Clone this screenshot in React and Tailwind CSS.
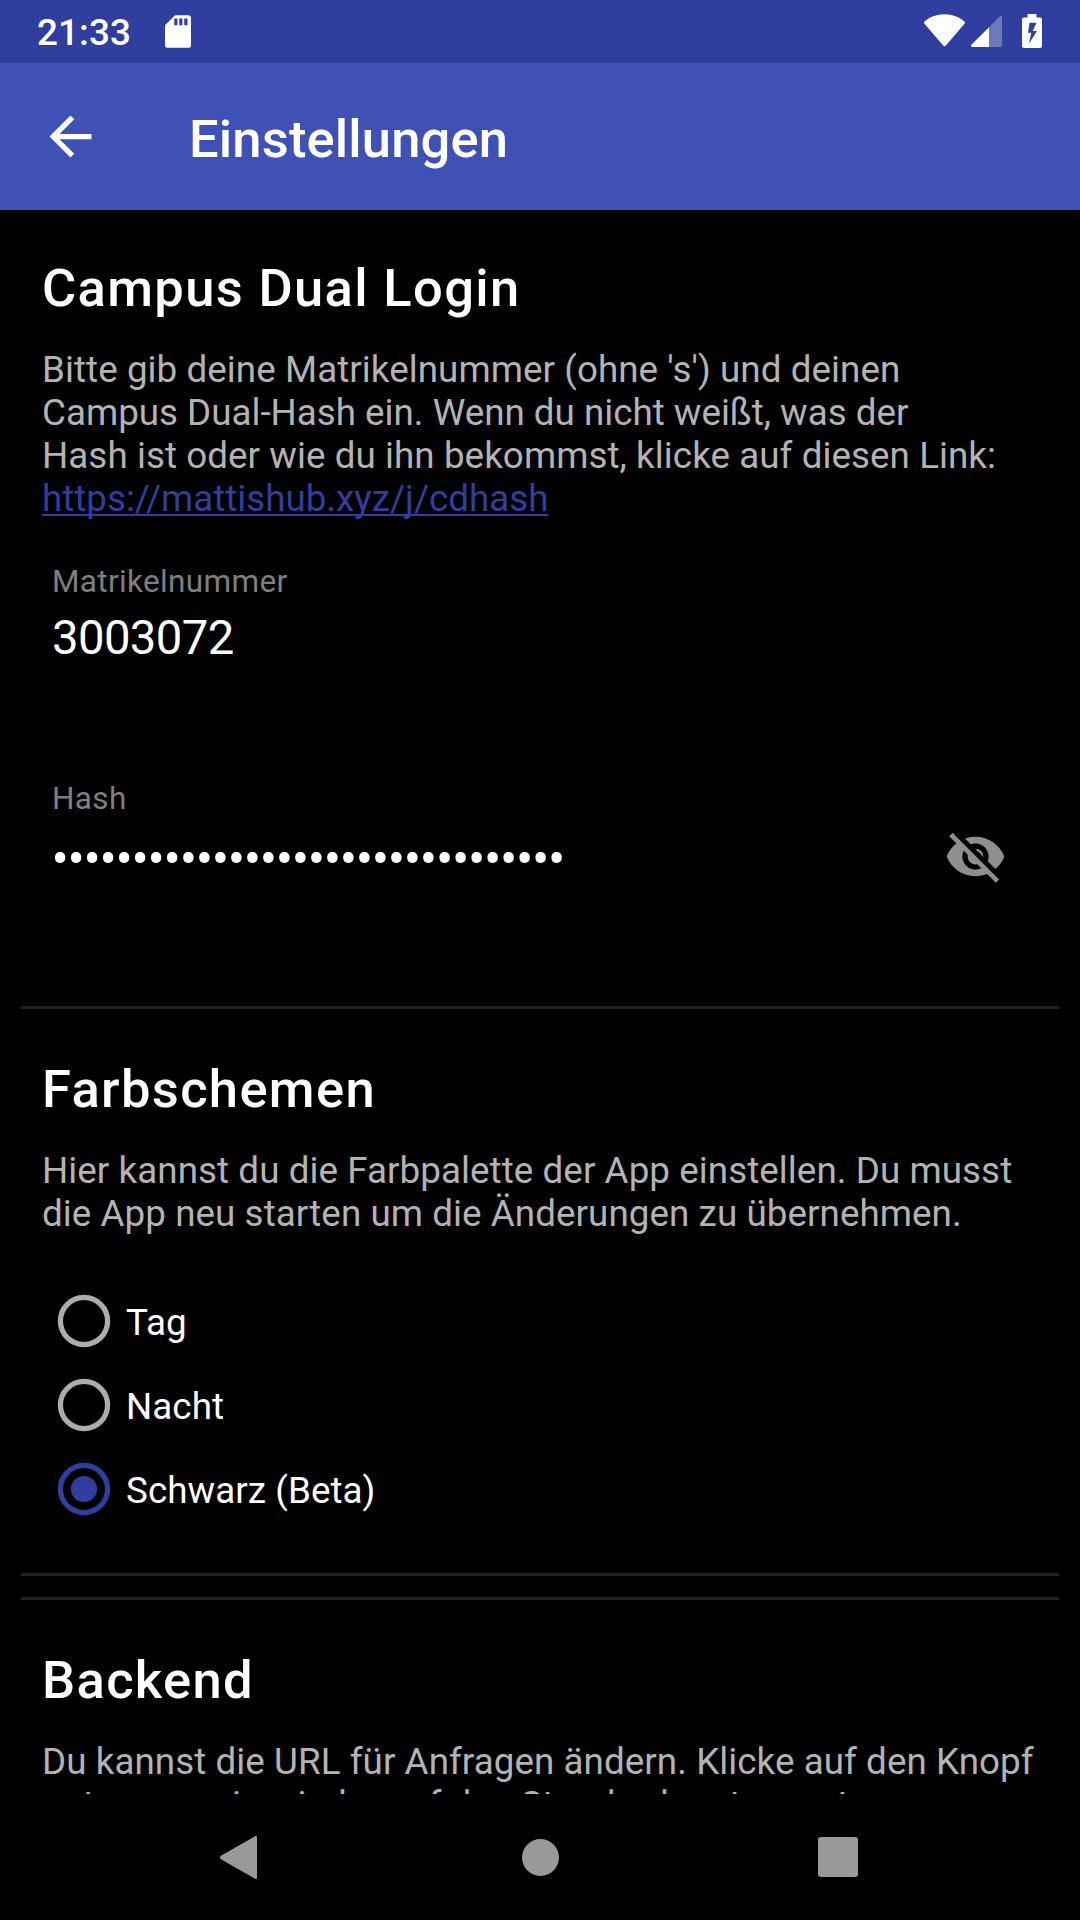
import React from "react";

function StatusBar() {
  return (
    <div className="flex h-[63px] shrink-0 items-center bg-[#303F9F] text-white">
      <span className="ml-[37px] mt-[2px] w-[93px] text-[36.75px] leading-[43px] font-medium tracking-[0.15px]">21:33</span>
      <svg className="ml-[35px]" width="26" height="33" viewBox="0 0 27 34" fill="currentColor">
        <path
          fillRule="evenodd"
          d="M10.5 0H24a3 3 0 0 1 3 3v28a3 3 0 0 1-3 3H3a3 3 0 0 1-3-3V10.5zM9.6 3.4v7h3.3v-7zM14.8 3.4v7h3.3v-7zM20 3.4v7h3.3v-7z"
        />
      </svg>
      <svg className="ml-auto -mt-[2px]" width="41" height="33" viewBox="0 0 41 33" fill="currentColor">
        <path d="M.6 7.6C5.4 3 12.5.2 20.5.2s15.100 2.800 19.900 7.400c.7.7.7 1.400.1 2.100L21.900 31.500c-.8.9-2 .9-2.800 0L.5 9.700c-.6-.7-.6-1.400.1-2.100z" />
      </svg>
      <svg className="ml-[6px]" width="31" height="31" viewBox="0 0 31 31" fill="currentColor">
        <path fillOpacity=".3" d="M28.600.6c1-1 2.400-.6 2.400.9V29a2 2 0 0 1-2 2H18V11.300z" />
        <path d="M18 11.300V31H1.600C0 31-.4 29.600.6 28.600z" />
      </svg>
      <svg className="-mt-px mr-[38px] ml-[20px]" width="20" height="34" viewBox="0 0 20 34" fill="currentColor">
        <path
          fillRule="evenodd"
          d="M5.500 0h9v3.500H18a2 2 0 0 1 2 2V32a2 2 0 0 1-2 2H2a2 2 0 0 1-2-2V5.500a2 2 0 0 1 2-2h3.500zM7.600 8.700L6 18.800h3.300L6.900 29.700 15 17H10.800l3.700-8.300z"
        />
      </svg>
    </div>
  );
}

function AppBar() {
  return (
    <div className="flex h-[147px] shrink-0 items-center bg-[#3F51B5] text-white">
      <svg className="-mt-px ml-[39px]" width="63" height="63" viewBox="0 0 24 24" fill="currentColor">
        <path d="M20 11H7.830l5.590-5.590L12 4l-8 8 8 8 1.410-1.410L7.830 13H20v-2z" />
      </svg>
      <h1 className="mt-[4px] ml-[87px] text-[52.5px] leading-[60px] font-medium tracking-[0.15px]">
        Einstellungen
      </h1>
    </div>
  );
}

function Heading({ children }) {
  return (
    <h2 className="text-[52.5px] leading-[60px] font-medium tracking-[1.340px] text-white">{children}</h2>
  );
}

function Body({ children }) {
  return (
    <p className="mt-[30px] text-[36.75px] leading-[43px] tracking-[0.07px] whitespace-nowrap text-[#B3B3B3]">
      {children}
    </p>
  );
}

function Divider() {
  return <div className="mx-[21px] h-[3px] shrink-0 bg-[#212121]" />;
}

function EyeOff() {
  return (
    <svg width="63" height="63" viewBox="0 0 24 24" fill="#8E8E8E">
      <defs>
        <clipPath id="strike-gap">
          <path d="M2 4L20 22 22.270 19.460 4.540 1.730V1H23V23H1V4z" />
        </clipPath>
      </defs>
      <path
        clipPath="url(#strike-gap)"
        d="M12 4.500C7 4.500 2.730 7.610 1 12c1.730 4.390 6 7.500 11 7.500s9.270-3.110 11-7.500c-1.730-4.390-6-7.500-11-7.500zM12 17c-2.760 0-5-2.240-5-5s2.240-5 5-5 5 2.240 5 5-2.240 5-5 5zM12 9c-1.660 0-3 1.340-3 3s1.340 3 3 3 3-1.340 3-3-1.340-3-3-3z"
      />
      <path d="M3.270 4.270L19.740 20.740" stroke="#8E8E8E" strokeWidth="1.8" strokeLinecap="square" />
    </svg>
  );
}

function Radio({ label, checked }) {
  return (
    <label className="flex h-[84px] items-center">
      <svg
        className={checked ? "text-[#303F9F]" : "text-[#ACACAC]"}
        width="84"
        height="84"
        viewBox="0 0 84 84"
        fill="none"
      >
        <circle cx="42" cy="42" r="23.600" stroke="currentColor" strokeWidth="5.250" />
        {checked && <circle cx="42" cy="42" r="13.100" fill="currentColor" />}
      </svg>
      <span className="mt-[3px] text-[36.75px] leading-[43px] tracking-[0.07px] text-white">{label}</span>
    </label>
  );
}

function NavBar() {
  return (
    <div className="flex h-[126px] shrink-0 items-center bg-black">
      <svg className="mt-px ml-[219px]" width="39" height="43" viewBox="0 0 39 43" fill="#999">
        <path d="M35.700.4c1.200-.7 2.300-.2 2.300 1.200v39.800c0 1.400-1.100 1.900-2.300 1.200L1.900 23.200c-1.200-.8-1.200-2.600 0-3.400z" />
      </svg>
      <div className="mt-px ml-[264px] size-[37px] rounded-full bg-[#999]" />
      <div className="ml-[259px] size-[40px] rounded-[3px] bg-[#999]" />
    </div>
  );
}

export default function App() {
  return (
    <div className="flex h-[1920px] w-[1080px] flex-col overflow-hidden bg-black font-['Roboto',sans-serif]">
      <StatusBar />
      <AppBar />
      <main className="flex min-h-0 flex-1 flex-col overflow-hidden">
        <section className="h-[796px] shrink-0 px-[42px] pt-[48px]">
          <Heading>Campus Dual Login</Heading>
          <Body>
            Bitte gib deine Matrikelnummer (ohne 's') und deinen
            <br />
            <span className="tracking-normal">Campus Dual-Hash ein. Wenn du nicht weißt, was der</span>
            <br />
            Hash ist oder wie du ihn bekommst, klicke auf diesen Link:
            <br />
            <a className="tracking-normal text-[#303F9F] underline decoration-[2px] underline-offset-[3px] [text-decoration-skip-ink:none]">
              https://mattishub.xyz/j/cdhash
            </a>
          </Body>
          <div className="mt-[43px] ml-[10px] flex flex-col">
            <span className="text-[31.5px] leading-[37px] tracking-[0.35px] text-[#7F7F7F]">Matrikelnummer</span>
            <span className="mt-[11px] text-[47.25px] leading-[55px] tracking-[-0.6px] text-white">3003072</span>
          </div>
          <div className="mt-[114px] ml-[10px] flex flex-col">
            <span className="text-[31.5px] leading-[37px] tracking-[0.35px] text-[#7F7F7F]">Hash</span>
            <div className="mt-[8px] flex items-center justify-between pr-[31px]">
              <span className="mt-[5px] -ml-[0.5px] text-[51.5px] leading-[55px] tracking-[-1.360px] text-white">
                ••••••••••••••••••••••••••••••••
              </span>
              <EyeOff />
            </div>
          </div>
        </section>
        <Divider />
        <section className="h-[564px] shrink-0 px-[42px] pt-[50px]">
          <Heading>Farbschemen</Heading>
          <Body>
            Hier kannst du die Farbpalette der App einstellen. Du musst
            <br />
            die App neu starten um die Änderungen zu übernehmen.
          </Body>
          <div className="mt-[44px]">
            <Radio label="Tag" />
            <Radio label="Nacht" />
            <Radio label="Schwarz (Beta)" checked />
          </div>
        </section>
        <Divider />
        <div className="h-[21px] shrink-0" />
        <Divider />
        <section className="shrink-0 px-[42px] pt-[50px]">
          <Heading>Backend</Heading>
          <Body>
            Du kannst die URL für Anfragen ändern. Klicke auf den Knopf
            <br />
            unten, um sie wieder auf den Standardwert zu setzen.
          </Body>
        </section>
      </main>
      <NavBar />
    </div>
  );
}
